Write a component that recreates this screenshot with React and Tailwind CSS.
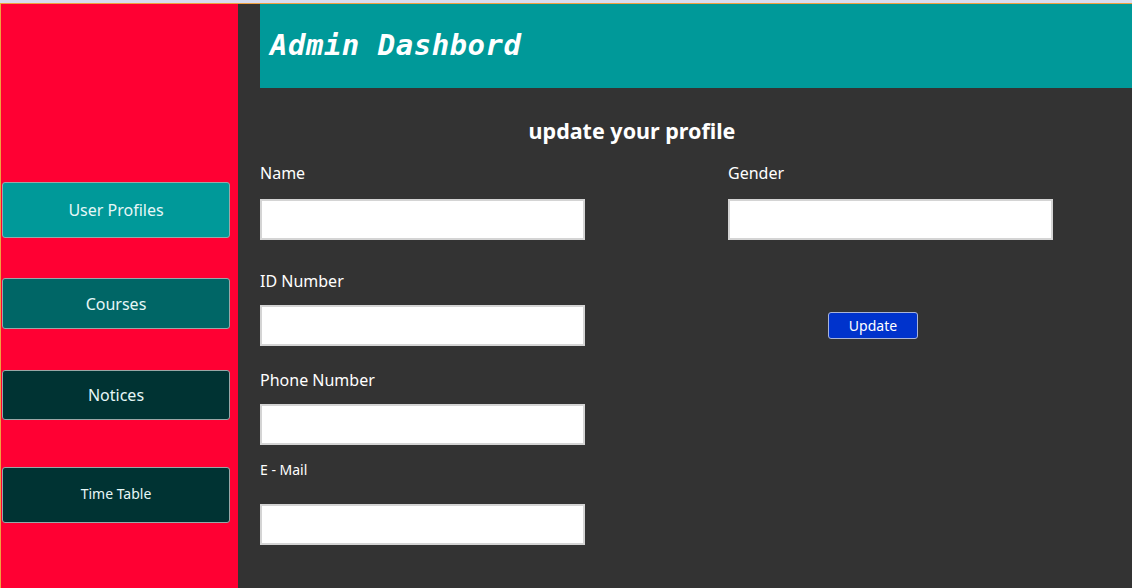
import React from 'react';

const sideItems = [
  { label: 'User Profiles', bg: 'bg-[#009999]', cls: 'mt-[178px] h-[56px] text-[16px]' },
  { label: 'Courses', bg: 'bg-[#006666]', cls: 'mt-[40px] h-[51px] text-[16px]' },
  { label: 'Notices', bg: 'bg-[#003333]', cls: 'mt-[41px] h-[50px] text-[16px]' },
  { label: 'Time Table', bg: 'bg-[#003333]', cls: 'mt-[47px] h-[56px] text-[14px] pb-[4px]' },
];

const Field = ({ label, labelCls, inputCls }) => (
  <div>
    <div className={labelCls}>{label}</div>
    <input
      type="text"
      className={`block w-[325px] h-[41px] bg-white border-2 border-[#d4d4d4] outline-none ${inputCls}`}
    />
  </div>
);

export default function App() {
  return (
    <div className="h-[588px] w-[1132px] overflow-hidden flex flex-col bg-[#333333] font-['Noto_Sans',sans-serif]">
      {/* top stripe */}
      <div className="h-[3px] bg-[#d9dcf0] shrink-0" />
      <div className="h-[1px] bg-[#f0a040] shrink-0" />

      <div className="flex flex-1">
        {/* sidebar */}
        <aside className="w-[238px] shrink-0 bg-[#ff0033] border-l border-[#f0a040] flex flex-col">
          {sideItems.map((item) => (
            <button
              key={item.label}
              className={`ml-[1px] w-[228px] ${item.cls} ${item.bg} border border-[#9aa7a7] rounded-[3px] text-[#e6f7f7] flex items-center justify-center`}
            >
              {item.label}
            </button>
          ))}
        </aside>

        {/* main */}
        <main className="flex-1 pl-[22px]">
          <header className="h-[84px] bg-[#009999] flex items-center pl-[10px]">
            <h1 className="text-white text-[29px] font-bold italic font-['DejaVu_Sans_Mono',monospace] tracking-[0.5px]">
              Admin Dashbord
            </h1>
          </header>

          <h2 className="mt-[29px] h-[28px] leading-[28px] text-center text-white font-bold text-[21.5px] pr-[128px]">
            update your profile
          </h2>

          <div className="flex mt-[16px] text-white">
            <div className="w-[468px]">
              <Field label="Name" labelCls="h-[24px] leading-[24px] text-[16px]" inputCls="mt-[14px]" />
              <div className="mt-[29px]">
                <Field label="ID Number" labelCls="h-[24px] leading-[24px] text-[16px]" inputCls="mt-[12px]" />
              </div>
              <div className="mt-[22px]">
                <Field label="Phone Number" labelCls="h-[24px] leading-[24px] text-[16px]" inputCls="mt-[12px]" />
              </div>
              <div className="mt-[15px]">
                <Field label="E - Mail" labelCls="h-[20px] leading-[20px] text-[14px]" inputCls="mt-[24px]" />
              </div>
            </div>

            <div className="flex-1">
              <Field label="Gender" labelCls="h-[24px] leading-[24px] text-[16px]" inputCls="mt-[14px]" />
              <button className="mt-[72px] ml-[100px] w-[90px] h-[27px] bg-[#0033cc] border border-[#a9b4d8] rounded-[3px] text-white text-[14px] flex items-center justify-center">
                Update
              </button>
            </div>
          </div>
        </main>
      </div>
    </div>
  );
}
